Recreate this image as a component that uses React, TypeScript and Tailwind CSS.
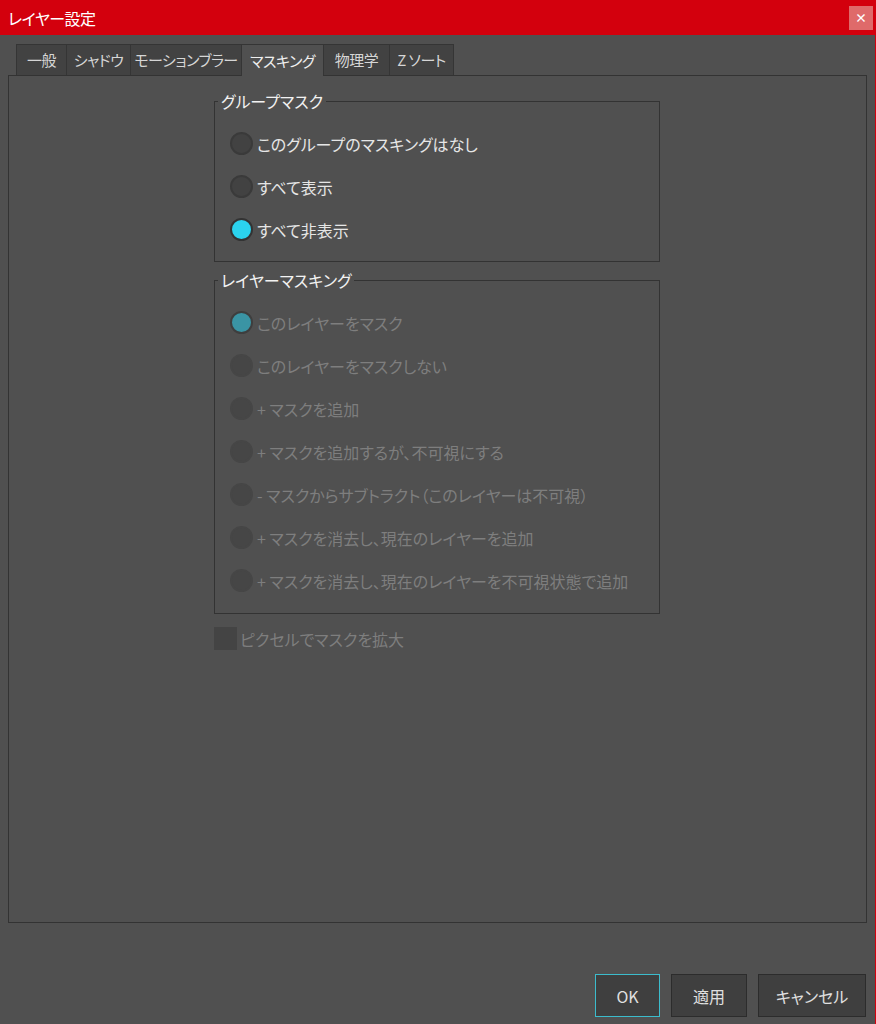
import React from "react";

const font = "[font-family:'Noto_Sans_CJK_JP','Noto_Sans',sans-serif] [font-feature-settings:'palt']";

function Radio({ label, checked, disabled }: { label: string; checked?: boolean; disabled?: boolean }) {
  let circle = "";
  if (disabled) {
    circle = checked ? "bg-[#3a94a4] border-2 border-[#3e3e3e]" : "bg-[#464646] border-2 border-[#464646]";
  } else {
    circle = checked ? "bg-[#2bd3ee] border-2 border-[#333333]" : "bg-[#424242] border-2 border-[#3a3a3a]";
  }
  return (
    <div className="h-[43px] flex items-center">
      <div className={`w-[23px] h-[23px] rounded-full shrink-0 ${circle}`} />
      <span className={`ml-[4px] text-[16px] leading-[22px] whitespace-nowrap ${disabled ? "text-[#7e7e7e]" : "text-[#e6e6e6]"}`}>{label}</span>
    </div>
  );
}

const tabs = [
  { label: "一般", w: "w-[50px]" },
  { label: "シャドウ", w: "w-[64px]" },
  { label: "モーションブラー", w: "w-[111px]" },
  { label: "マスキング", w: "w-[82px]", active: true },
  { label: "物理学", w: "w-[66px]" },
  { label: "Z ソート", w: "w-[65px]" },
];

export default function App() {
  return (
    <div className={`w-[876px] h-[1024px] bg-[#505050] border-r border-[#d3000d] flex flex-col ${font}`}>
      {/* title bar */}
      <div className="h-[35px] bg-[#d3000d] flex items-center justify-between pl-[8px] pr-[2px] shrink-0">
        <span className="text-white text-[16px] leading-[20px] tracking-[-0.5px]">レイヤー設定</span>
        <div className="w-[24px] h-[24px] bg-[#df6a6a] flex items-center justify-center text-white text-[12px] font-bold leading-none">×</div>
      </div>

      <div className="flex-1 flex flex-col pl-[8px] pr-[8px]">
        {/* tabs */}
        <div className="flex mt-[9px] pl-[8px] h-[31px]">
          {tabs.map((t) => (
            <div
              key={t.label}
              className={`${t.w} h-[31px] flex items-center justify-center whitespace-nowrap text-[15px] tracking-[-0.5px] leading-[20px] border-t border-l border-[#353535] last:border-r ${
                t.active ? "bg-[#505050] text-[#eeeeee] relative z-10 h-[32px]" : "bg-[#424242] text-[#d6d6d6]"
              }`}
            >
              {t.label}
            </div>
          ))}
        </div>

        {/* panel */}
        <div className="h-[848px] border border-[#333333] bg-[#505050] pl-[205px]">
          <fieldset className="w-[446px] border border-[#333333] mt-[14px] pb-[10px]">
            <legend className="ml-[3px] px-[3px] text-[16px] leading-[22px] text-[#f2f2f2]">グループマスク</legend>
            <div className="pt-[10px] pl-[15px]">
              <Radio label="このグループのマスキングはなし" />
              <Radio label="すべて表示" />
              <Radio label="すべて非表示" checked />
            </div>
          </fieldset>

          <fieldset className="w-[446px] border border-[#333333] mt-[7px] pb-[11px]">
            <legend className="ml-[3px] px-[3px] text-[16px] leading-[22px] text-[#f2f2f2]">レイヤーマスキング</legend>
            <div className="pt-[10px] pl-[15px]">
              <Radio label="このレイヤーをマスク" checked disabled />
              <Radio label="このレイヤーをマスクしない" disabled />
              <Radio label="+ マスクを追加" disabled />
              <Radio label="+ マスクを追加するが、不可視にする" disabled />
              <Radio label="- マスクからサブトラクト（このレイヤーは不可視）" disabled />
              <Radio label="+ マスクを消去し、現在のレイヤーを追加" disabled />
              <Radio label="+ マスクを消去し、現在のレイヤーを不可視状態で追加" disabled />
            </div>
          </fieldset>

          <div className="flex items-center mt-[13px]">
            <div className="w-[23px] h-[23px] bg-[#444444]" />
            <span className="ml-[3px] text-[16px] leading-[22px] text-[#7e7e7e]">ピクセルでマスクを拡大</span>
          </div>
        </div>

        {/* buttons */}
        <div className="flex justify-end gap-[11px] mt-[51px] pr-[1px]">
          <div className="w-[65px] h-[43px] bg-[#3f3f3f] border border-[#3cbccc] flex items-center justify-center text-[16px] text-[#e0e0e0]">OK</div>
          <div className="w-[76px] h-[43px] bg-[#3f3f3f] border border-[#2c2c2c] flex items-center justify-center text-[16px] text-[#e0e0e0]">適用</div>
          <div className="w-[108px] h-[43px] bg-[#3f3f3f] border border-[#2c2c2c] flex items-center justify-center text-[16px] text-[#e0e0e0]">キャンセル</div>
        </div>
      </div>
    </div>
  );
}
